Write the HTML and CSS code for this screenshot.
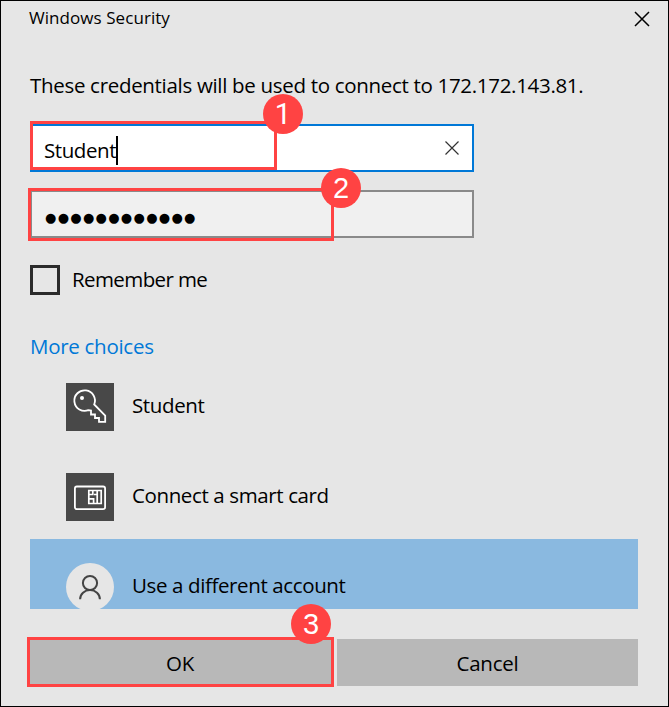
FILE: index.html
```html
<!DOCTYPE html>
<html lang="en">
<head>
<meta charset="utf-8">
<title>Windows Security</title>
<link rel="stylesheet" href="styles.css">
</head>
<body>
<main class="dialog">
  <header class="titlebar">
    <h1 class="title">Windows Security</h1>
    <svg class="close" width="16" height="16" viewBox="0 0 16 16"><path d="M1 1 15 15M15 1 1 15"/></svg>
  </header>
  <p class="message">These credentials will be used to connect to 172.172.143.81.</p>
  <div class="field field-user">
    <span class="user-text">Student</span><span class="caret"></span>
    <svg class="clear" width="14" height="14" viewBox="0 0 14 14"><path d="M.5 .5 13.5 13.5M13.5 .5 .5 13.5"/></svg>
    <div class="mark mark-user"></div><div class="badge badge-user">1</div>
  </div>
  <div class="field field-pass">
    <span class="dots">●●●●●●●●●●●●</span>
    <div class="mark mark-pass"></div><div class="badge badge-pass">2</div>
  </div>
  <div class="remember"><span class="box"></span><span class="remember-text">Remember me</span></div>
  <div class="more">More choices</div>
  <ul class="choices">
    <li class="choice">
      <svg class="tile" width="48" height="48" viewBox="0 0 48 48">
        <path class="line" d="M28.2 21.5A10.3 10.3 0 1 0 22.4 27.2L25 27.5V31.5H29V35H33V38.8H39.2V32.6Z"/>
        <circle class="dot" cx="16" cy="15" r="2"/>
      </svg>
      <span class="choice-text">Student</span>
    </li>
    <li class="choice">
      <svg class="tile" width="48" height="48" viewBox="0 0 48 48">
        <rect class="line" x="8.9" y="13.5" width="30.2" height="22.7" rx="2"/>
        <path class="line chip" d="M22.8 17.5H35.2V30.5H22.8ZM26.8 17.5V21.5H23M31.2 17.5V21.5H28M31.2 22V30M23 25.8H27.6V30"/>
      </svg>
      <span class="choice-text">Connect a smart card</span>
    </li>
    <li class="choice selected">
      <svg class="avatar" width="48" height="48" viewBox="0 0 48 48">
        <circle class="disc" cx="24" cy="24" r="24"/>
        <circle class="person" cx="24" cy="20" r="7.1"/><path class="person" d="M14.1 36.2a9.9 9.2 0 0 1 19.8 0"/>
      </svg>
      <span class="choice-text">Use a different account</span>
    </li>
  </ul>
  <div class="buttons">
    <div class="button ok"><span>OK</span><div class="mark mark-ok"></div><div class="badge badge-ok">3</div></div>
    <div class="button cancel"><span>Cancel</span></div>
  </div>
</main>
</body>
</html>
```
FILE: styles.css
```css
* { box-sizing: border-box; }
body { margin: 0; }
.dialog {
  width: 669px; height: 707px; padding: 0 30px 0 29px; overflow: hidden;
  border: 1px solid #000; background: #e6e6e6; color: #000;
  font: 20.5px/28px "Open Sans", "Noto Sans", sans-serif;
  white-space: nowrap;
}
.titlebar { display: flex; justify-content: space-between; height: 70px; padding-top: 5px; }
.title { margin: 0 0 0 -1px; font-size: 17px; line-height: 24px; font-weight: 400; letter-spacing: .06px; }
.close { margin: 5px -12px 0 0; fill: none; stroke: #000; stroke-width: 1.5; }
.message { margin: 0; height: 53px; letter-spacing: -.31px; }
.field { position: relative; display: flex; align-items: center; width: 444px; height: 48px; padding: 0 12px; }
.field-user { background: #fff; border: 2px solid #0078d7; }
.user-text { margin-top: 4px; letter-spacing: -.42px; }
.caret { width: 2px; height: 29px; margin-top: 4px; background: #000; }
.clear { margin: 0 1px 0 auto; fill: none; stroke: #333; stroke-width: 1.2; }
.field-pass { margin-top: 18px; background: #f0f0f0; border: 2px solid #8a8a8a; }
.dots { font: 13px/20px "DejaVu Sans", sans-serif; letter-spacing: 1.3px; margin: 8px 0 0 1px; }
.mark { position: absolute; border: 3px solid #ff4343; }
.mark-user { left: -2px; top: -5px; width: 247px; height: 49px; }
.mark-pass { left: -4px; top: -4px; width: 306px; height: 53px; }
.badge {
  position: absolute; width: 40px; height: 40px; border-radius: 50%;
  background: #ff4343; color: #fff; text-align: center;
  font: 29px/41px "Liberation Sans", sans-serif; letter-spacing: 0;
}
.badge-user { left: 231px; top: -32px; font-family: Roboto, sans-serif; }
.badge-pass { left: 289px; top: -24px; }
.remember { display: flex; align-items: center; height: 30px; margin-top: 27px; gap: 12px; letter-spacing: -.6px; }
.remember-text { margin-top: -2px; }
.box { width: 30px; height: 30px; border: 3px solid #2b2b2b; }
.more { height: 28px; margin-top: 37px; color: #0078d7; letter-spacing: -.28px; }
.choices { list-style: none; margin: -1px 0 0; padding: 0; height: 250px; overflow: hidden; }
.choice { display: flex; align-items: center; gap: 18px; height: 90px; padding: 6px 0 0 36px; }
.choice-text { margin-top: -4px; letter-spacing: -.38px; }
.selected { background: #8ab9e0; }
.tile { background: #484848; }
.line { fill: none; stroke: #fff; stroke-width: 1.8; }
.chip { stroke-width: 1.7; }
.dot { fill: #fff; }
.disc { fill: #e6e6e6; }
.person { fill: none; stroke: #444; stroke-width: 2; }
.buttons { display: flex; gap: 5px; margin-top: 30px; }
.button { position: relative; height: 47px; display: flex; align-items: center; justify-content: center; background: #b8b8b8; letter-spacing: -.25px; }
.ok { width: 302px; padding-right: 2px; }
.cancel { width: 301px; }
.mark-ok { left: -3px; top: -2px; width: 307px; height: 50px; }
.badge-ok { left: 261px; top: -35px; }
```
